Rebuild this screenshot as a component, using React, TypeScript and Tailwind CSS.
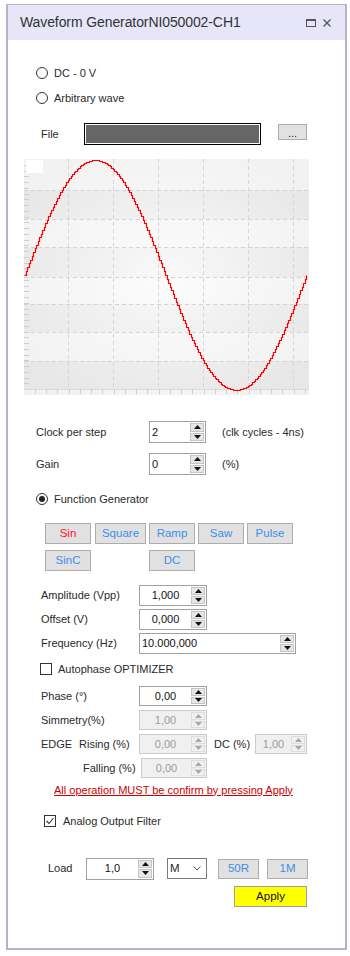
import React from "react";

const F = { fontFamily: '"Liberation Sans", Arial, sans-serif' };

function Tri({ up, disabled }: { up: boolean; disabled?: boolean }) {
  const c = disabled ? "#a8a8a8" : "#111111";
  return (
    <svg width="7" height="4" viewBox="0 0 7 4">
      {up ? <polygon points="0,4 7,4 3.5,0" fill={c} /> : <polygon points="0,0 7,0 3.5,4" fill={c} />}
    </svg>
  );
}

function Spin({
  cls,
  v,
  align = "center",
  disabled = false,
}: {
  cls: string;
  v: string;
  align?: "center" | "left";
  disabled?: boolean;
}) {
  return (
    <div
      className={`${cls} flex items-stretch border ${
        disabled ? "border-[#cccccc] bg-[#f0f0f0] text-[#9a9a9a]" : "border-[#a0a0a0] bg-white text-[#111]"
      }`}
    >
      <div
        className={`flex-1 flex items-center text-[11px] ${align === "center" ? "justify-center" : "justify-start pl-[2px]"}`}
      >
        {v}
      </div>
      <div className="w-[14px] my-[1px] mr-[1px] flex flex-col gap-[1px]">
        <div
          className={`flex-1 flex items-center justify-center border ${
            disabled ? "border-[#dddddd] bg-[#f0f0f0]" : "border-[#c4c4c4] bg-[#e6e6e6]"
          }`}
        >
          <Tri up disabled={disabled} />
        </div>
        <div
          className={`flex-1 flex items-center justify-center border ${
            disabled ? "border-[#dddddd] bg-[#f0f0f0]" : "border-[#c4c4c4] bg-[#e6e6e6]"
          }`}
        >
          <Tri up={false} disabled={disabled} />
        </div>
      </div>
    </div>
  );
}

function Radio({ checked }: { checked?: boolean }) {
  return (
    <div className="w-[12px] h-[12px] rounded-full border border-[#333] bg-white flex items-center justify-center">
      {checked && <div className="w-[6px] h-[6px] rounded-full bg-[#222]" />}
    </div>
  );
}

function Check({ checked }: { checked?: boolean }) {
  return (
    <div className="w-[12px] h-[12px] border border-[#333] bg-white flex items-center justify-center">
      {checked && (
        <svg width="10" height="10" viewBox="0 0 10 10">
          <polyline points="1.5,5 4,7.5 8.5,2" fill="none" stroke="#333" strokeWidth="1.1" />
        </svg>
      )}
    </div>
  );
}

function Btn({ cls, label, red }: { cls: string; label: string; red?: boolean }) {
  return (
    <div
      className={`${cls} h-[21px] border border-[#adadad] bg-[#e1e1e1] flex items-center justify-center text-[11.5px] ${
        red ? "text-[#ff1030]" : "text-[#3d8fe8]"
      }`}
    >
      {label}
    </div>
  );
}

function Chart() {
  const W = 285;
  const H = 236;
  const hl = [31, 60, 88, 118, 145, 173, 202];
  const bands: [number, number, boolean][] = [
    [0, 31, false],
    [31, 60, true],
    [60, 88, false],
    [88, 118, true],
    [118, 145, false],
    [145, 173, true],
    [173, 202, false],
    [202, 230, true],
    [230, 236, false],
  ];
  const vl = [44, 89, 134, 179, 224, 269];
  let d = "";
  for (let x = 0; x <= 282; x += 1.5) {
    const y = Math.round(116 - 115 * Math.sin((2 * Math.PI * x) / 282)) + 0.5;
    if (x === 0) d += `M0.5 ${y}`;
    else d += ` H${Math.round(x) + 0.5} V${y}`;
  }
  const leftTicks: number[] = [];
  for (let y = 5.75; y < 230; y += 5.75) leftTicks.push(Math.round(y) + 0.5);
  const botTicks: number[] = [];
  for (let x = 10.75; x < W; x += 11.25) botTicks.push(Math.round(x) + 0.5);
  return (
    <div className="ml-[16px] mt-[14px] w-[285px] h-[236px]">
      <svg width={W} height={H} viewBox={`0 0 ${W} ${H}`}>
        <defs>
          <radialGradient id="rg" cx="0.5" cy="0.5" r="0.6">
            <stop offset="0" stopColor="#ffffff" stopOpacity="0.75" />
            <stop offset="1" stopColor="#ffffff" stopOpacity="0" />
          </radialGradient>
        </defs>
        {bands.map(([a, b, dark], i) => (
          <rect key={i} x="0" y={a} width={W} height={b - a} fill={dark ? "#e7e7e7" : "#f2f2f2"} />
        ))}
        <rect x="0" y="0" width={W} height={H} fill="url(#rg)" />
        {hl.map((y) => (
          <line key={y} x1="0" x2={W} y1={y + 0.5} y2={y + 0.5} stroke="#d4d4d4" strokeDasharray="4 3" />
        ))}
        {vl.map((x) => (
          <line key={x} x1={x + 0.5} x2={x + 0.5} y1="0" y2="230" stroke="#d6d6d6" strokeDasharray="4 3" />
        ))}
        <line x1="0" x2={W} y1="230.5" y2="230.5" stroke="#dadada" />
        {leftTicks.map((y) => (
          <line key={y} x1="0" x2="5" y1={y} y2={y} stroke="#cfcfcf" />
        ))}
        {botTicks.map((x) => (
          <line key={x} x1={x} x2={x} y1="230" y2="235" stroke="#cfcfcf" />
        ))}
        <rect x="2" y="1" width="17" height="13" fill="#ffffff" />
        <path d={d} fill="none" stroke="#ff0000" strokeWidth="1.2" />
      </svg>
    </div>
  );
}

export default function App() {
  return (
    <div className="w-[350px] h-[956px] bg-white pt-[4px] pl-[6px]" style={F}>
      <div className="w-[341px] h-[946px] border-t border-l-2 border-r-2 border-b-2 border-[#b4b4c6] flex flex-col text-[#2a2a2a]">
        <div className="h-[35px] bg-[#e6e6f8] flex items-center pl-[12px] pr-[14px]">
          <div className="flex-1 text-[14px] text-[#333] tracking-[-0.1px]">Waveform GeneratorNI050002-CH1</div>
          <svg width="10" height="8" viewBox="0 0 10 8" className="mr-[7px]">
            <rect x="0.5" y="0.5" width="9" height="7" fill="none" stroke="#555" />
            <line x1="0" x2="10" y1="1.5" y2="1.5" stroke="#555" />
          </svg>
          <svg width="8" height="8" viewBox="0 0 8 8">
            <path d="M0.5 0.5 L7.5 7.5 M7.5 0.5 L0.5 7.5" stroke="#555" strokeWidth="1.3" />
          </svg>
        </div>
        <div className="flex flex-col text-[11px]">
          <div className="mt-[23px] h-[20px] pl-[28px] flex items-center gap-[6px]">
            <Radio />
            <span>DC - 0 V</span>
          </div>
          <div className="mt-[5px] h-[20px] pl-[28px] flex items-center gap-[6px]">
            <Radio />
            <span>Arbitrary wave</span>
          </div>
          <div className="mt-[15px] h-[22px] pl-[33px] flex items-start">
            <div className="w-[43px] h-[22px] flex items-center">File</div>
            <div className="w-[177px] h-[22px] border border-black bg-white p-[1px]">
              <div className="w-full h-full bg-[#666666]" />
            </div>
            <div className="ml-[17px] mt-[1px] w-[29px] h-[16px] border border-[#adadad] bg-[#e1e1e1] flex items-center justify-center text-[11px] leading-none pt-[2px]">
              ...
            </div>
          </div>
          <Chart />
          <div className="mt-[26px] h-[22px] pl-[28px] flex items-center">
            <div className="w-[113px]">Clock per step</div>
            <Spin cls="w-[57px] h-[22px]" v="2" align="left" />
            <div className="ml-[16px]">(clk cycles - 4ns)</div>
          </div>
          <div className="mt-[10px] h-[22px] pl-[28px] flex items-center">
            <div className="w-[113px]">Gain</div>
            <Spin cls="w-[57px] h-[22px]" v="0" align="left" />
            <div className="ml-[16px]">(%)</div>
          </div>
          <div className="mt-[18px] h-[12px] pl-[28px] flex items-center gap-[6px]">
            <Radio checked />
            <span>Function Generator</span>
          </div>
          <div className="mt-[18px] pl-[37px] flex">
            <Btn cls="w-[46px]" label="Sin" red />
            <Btn cls="w-[51px] ml-[4px]" label="Square" />
            <Btn cls="w-[46px] ml-[3px]" label="Ramp" />
            <Btn cls="w-[46px] ml-[3px]" label="Saw" />
            <Btn cls="w-[46px] ml-[3px]" label="Pulse" />
          </div>
          <div className="mt-[6px] pl-[37px] flex">
            <Btn cls="w-[46px]" label="SinC" />
            <Btn cls="w-[46px] ml-[58px]" label="DC" />
          </div>
          <div className="mt-[14px] h-[21px] pl-[33px] flex items-center">
            <div className="w-[98px]">Amplitude (Vpp)</div>
            <Spin cls="w-[68px] h-[21px]" v="1,000" />
          </div>
          <div className="mt-[3px] h-[21px] pl-[33px] flex items-center">
            <div className="w-[98px]">Offset (V)</div>
            <Spin cls="w-[68px] h-[21px]" v="0,000" />
          </div>
          <div className="mt-[3px] h-[21px] pl-[33px] flex items-center">
            <div className="w-[98px]">Frequency (Hz)</div>
            <Spin cls="w-[157px] h-[21px]" v="10.000,000" align="left" />
          </div>
          <div className="mt-[8px] h-[14px] pl-[32px] flex items-center gap-[6px]">
            <Check />
            <span>Autophase OPTIMIZER</span>
          </div>
          <div className="mt-[10px] h-[20px] pl-[33px] flex items-center">
            <div className="w-[98px]">Phase (°)</div>
            <Spin cls="w-[68px] h-[20px]" v="0,00" />
          </div>
          <div className="mt-[4px] h-[20px] pl-[33px] flex items-center">
            <div className="w-[98px]">Simmetry(%)</div>
            <Spin cls="w-[68px] h-[20px]" v="1,00" disabled />
          </div>
          <div className="mt-[4px] h-[20px] pl-[33px] flex items-center">
            <div className="w-[38px]">EDGE</div>
            <div className="w-[60px]">Rising (%)</div>
            <Spin cls="w-[68px] h-[20px]" v="0,00" disabled />
            <div className="ml-[7px] w-[41px]">DC (%)</div>
            <Spin cls="w-[52px] h-[20px]" v="1,00" disabled />
          </div>
          <div className="mt-[4px] h-[20px] pl-[75px] flex items-center">
            <div className="w-[58px]">Falling (%)</div>
            <Spin cls="w-[66px] h-[20px]" v="0,00" disabled />
          </div>
          <div className="mt-[5px] h-[14px] pl-[46px] flex items-center">
            <span className="underline text-[#cc0000] text-[11px]">All operation MUST be confirm by pressing Apply</span>
          </div>
          <div className="mt-[17px] h-[14px] pl-[36px] flex items-center gap-[7px]">
            <Check checked />
            <span>Analog Output Filter</span>
          </div>
          <div className="mt-[30px] h-[21px] pl-[40px] flex items-center">
            <div className="w-[38px]">Load</div>
            <Spin cls="w-[68px] h-[22px]" v="1,0" />
            <div className="ml-[13px] w-[40px] h-[21px] border border-[#7a7a7a] bg-white flex items-center pl-[2px] pr-[5px]">
              <span className="flex-1 text-[11.5px]">M</span>
              <svg width="8" height="5" viewBox="0 0 8 5">
                <polyline points="0.5,0.5 4,4 7.5,0.5" fill="none" stroke="#555" />
              </svg>
            </div>
            <div className="ml-[11px] w-[41px] h-[20px] border border-[#adadad] bg-[#e1e1e1] flex items-center justify-center text-[11.5px] text-[#3d8fe8]">
              50R
            </div>
            <div className="ml-[8px] w-[41px] h-[20px] border border-[#adadad] bg-[#e1e1e1] flex items-center justify-center text-[11.5px] text-[#3d8fe8]">
              1M
            </div>
          </div>
          <div className="mt-[7px] pl-[226px] flex">
            <div className="w-[73px] h-[21px] border border-[#a0a0a0] bg-[#ffff00] flex items-center justify-center text-[11.5px] text-[#111]">
              Apply
            </div>
          </div>
        </div>
      </div>
    </div>
  );
}
